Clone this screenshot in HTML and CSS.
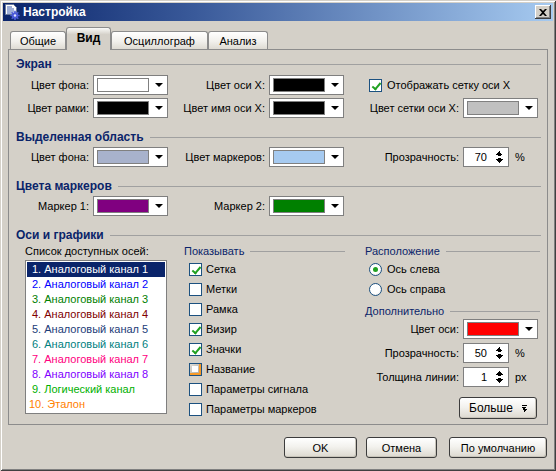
FILE: index.html
```html
<!DOCTYPE html>
<html lang="ru">
<head>
  <meta charset="UTF-8" />
  <title>Настройка</title>
  <link rel="stylesheet" href="styles.css">
</head>
<body>
  <div class="window">
    <div class="titlebar">
      <svg class="app-icon" width="16" height="16" viewBox="0 0 16 16">
        <path d="M1.5 0.5h8l3 3v7h-11z" fill="#fff" stroke="#6a7a9a"/>
        <path d="M3 3h5M3 5h7M3 7h7M3 9h5" stroke="#4060b0"/>
        <circle cx="11" cy="11.5" r="3.2" fill="#4a5ad8"/>
        <path d="M11 6.8v9.4M6.3 11.5h9.4M7.7 8.2l6.6 6.6M14.3 8.2l-6.6 6.6" stroke="#4a5ad8" stroke-width="1.6"/>
        <circle cx="11" cy="11.5" r="1.2" fill="#dfe4ff"/>
      </svg>
      <span class="title">Настройка</span>
      <div class="close-btn">
        <svg width="8" height="7" viewBox="0 0 8 7"><path d="M0 0h2l2 2 2-2h2L5 3.5 8 7H6L4 5 2 7H0l3-3.5z" fill="#000"/></svg>
      </div>
    </div>

    <div class="content">
      <div class="tabs">
        <div class="tab tab-general">Общие</div>
        <div class="tab tab-view active">Вид</div>
        <div class="tab tab-osc">Осциллограф</div>
        <div class="tab tab-analysis">Анализ</div>
      </div>

      <div class="panel">
        <div class="group-title">Экран</div>
        <div class="form-grid first">
          <span class="lbl">Цвет фона:</span>
          <div class="combo"><span class="swatch" style="background:#ffffff"></span><span class="arrow"></span></div>
          <span class="lbl">Цвет оси X:</span>
          <div class="combo"><span class="swatch" style="background:#000000"></span><span class="arrow"></span></div>
          <div class="check-cell"><span class="check checked"></span>Отображать сетку оси X</div>

          <span class="lbl">Цвет рамки:</span>
          <div class="combo"><span class="swatch" style="background:#000000"></span><span class="arrow"></span></div>
          <span class="lbl">Цвет имя оси X:</span>
          <div class="combo"><span class="swatch" style="background:#000000"></span><span class="arrow"></span></div>
          <span class="lbl">Цвет сетки оси X:</span>
          <div class="combo"><span class="swatch" style="background:#c0c0c0"></span><span class="arrow"></span></div>
        </div>

        <div class="group-title spaced">Выделенная область</div>
        <div class="form-grid">
          <span class="lbl">Цвет фона:</span>
          <div class="combo"><span class="swatch" style="background:#a8b2cc"></span><span class="arrow"></span></div>
          <span class="lbl">Цвет маркеров:</span>
          <div class="combo"><span class="swatch" style="background:#a6caf0"></span><span class="arrow"></span></div>
          <span class="lbl">Прозрачность:</span>
          <div class="spin-cell"><div class="spin">70<span class="spin-arrows"></span></div><span class="unit">%</span></div>
        </div>

        <div class="group-title spaced">Цвета маркеров</div>
        <div class="form-grid">
          <span class="lbl">Маркер 1:</span>
          <div class="combo"><span class="swatch" style="background:#800080"></span><span class="arrow"></span></div>
          <span class="lbl">Маркер 2:</span>
          <div class="combo"><span class="swatch" style="background:#008000"></span><span class="arrow"></span></div>
        </div>

        <div class="group-title spaced">Оси и графики</div>
        <div class="axes">
          <div class="axes-list">
            <div class="caption">Список доступных осей:</div>
            <ul class="listbox">
              <li class="selected">1. Аналоговый канал 1</li>
              <li class="c2">2. Аналоговый канал 2</li>
              <li class="c3">3. Аналоговый канал 3</li>
              <li class="c4">4. Аналоговый канал 4</li>
              <li class="c5">5. Аналоговый канал 5</li>
              <li class="c6">6. Аналоговый канал 6</li>
              <li class="c7">7. Аналоговый канал 7</li>
              <li class="c8">8. Аналоговый канал 8</li>
              <li class="c9">9. Логический канал</li>
              <li class="c10">10. Эталон</li>
            </ul>
          </div>

          <div class="axes-show">
            <div class="sub-title">Показывать</div>
            <div class="opt"><span class="check checked"></span>Сетка</div>
            <div class="opt"><span class="check"></span>Метки</div>
            <div class="opt"><span class="check"></span>Рамка</div>
            <div class="opt"><span class="check checked"></span>Визир</div>
            <div class="opt"><span class="check checked"></span>Значки</div>
            <div class="opt"><span class="check hot"></span>Название</div>
            <div class="opt"><span class="check"></span>Параметры сигнала</div>
            <div class="opt"><span class="check"></span>Параметры маркеров</div>
          </div>

          <div class="axes-place">
            <div class="sub-title">Расположение</div>
            <div class="opt radio-opt"><span class="radio on"></span>Ось слева</div>
            <div class="opt radio-opt"><span class="radio"></span>Ось справа</div>
            <div class="sub-title extra">Дополнительно</div>
            <div class="extra-grid">
              <span class="lbl">Цвет оси:</span>
              <div class="combo"><span class="swatch" style="background:#ff0000"></span><span class="arrow"></span></div>
              <span class="lbl">Прозрачность:</span>
              <div class="spin-cell"><div class="spin">50<span class="spin-arrows"></span></div><span class="unit">%</span></div>
              <span class="lbl">Толщина линии:</span>
              <div class="spin-cell"><div class="spin">1<span class="spin-arrows"></span></div><span class="unit">px</span></div>
            </div>
            <div class="more-row">
              <button class="btn more">Больше <span class="more-icon"></span></button>
            </div>
          </div>
        </div>
      </div>

      <div class="dialog-buttons">
        <button class="btn btn-ok">OK</button>
        <button class="btn btn-cancel">Отмена</button>
        <button class="btn btn-default">По умолчанию</button>
      </div>
    </div>
  </div>
</body>
</html>
```

FILE: styles.css
```css
* {
  margin: 0;
  padding: 0;
  box-sizing: border-box;
}
body {
  background: #d4d0c8;
  font-family: "Liberation Sans", Arial, sans-serif;
  font-size: 11px;
  color: #000;
}
.window {
  width: 556px;
  height: 471px;
  padding: 3px;
  background: #d4d0c8;
  box-shadow: inset 1px 1px #d4d0c8, inset -1px -1px #404040, inset 2px 2px #fff, inset -2px -2px #808080;
}

/* title bar */
.titlebar {
  height: 18px;
  display: flex;
  align-items: center;
  padding: 0 2px 0 1px;
  background: linear-gradient(to right, #0a246a, #3a5a9a 35%, #a6caf0);
  color: #fff;
}
.app-icon {
  flex-shrink: 0;
}
.title {
  margin-left: 3px;
  font-weight: bold;
  font-size: 12px;
}
.close-btn {
  margin-left: auto;
  width: 16px;
  height: 14px;
  display: flex;
  align-items: center;
  justify-content: center;
  background: #d4d0c8;
  box-shadow: inset -1px -1px #404040, inset 1px 1px #fff, inset -2px -2px #808080;
}

/* tabs */
.content {
  padding: 0 5px;
}
.tabs {
  display: flex;
  align-items: flex-end;
  height: 22px;
  margin-top: 6px;
  padding-left: 2px;
  position: relative;
  z-index: 1;
}
.tab {
  height: 18px;
  display: flex;
  align-items: center;
  justify-content: center;
  border: 1px solid #8c8c8c;
  border-bottom: none;
  border-radius: 3px 3px 0 0;
  background: linear-gradient(#fff, #f1f0ec 55%, #dedbd3);
}
.tab-general { width: 56px; }
.tab-view { width: 45px; }
.tab-osc { width: 97px; }
.tab-analysis { width: 60px; }
.tab.active {
  height: 23px;
  margin-bottom: -1px;
  font-weight: bold;
  font-size: 12px;
  background: linear-gradient(#fafaf8, #d4d0c8 30%);
  padding-bottom: 2px;
}

/* panel */
.panel {
  width: 540px;
  height: 376px;
  border: 1px solid #8c8c8c;
  padding: 7px 6px 0 7px;
}
.group-title {
  display: flex;
  align-items: center;
  gap: 6px;
  height: 14px;
  color: #0a246a;
  font-weight: bold;
  font-size: 12px;
}
.group-title::after,
.sub-title::after {
  content: "";
  flex: 1;
  height: 1px;
  background: #a0a0a0;
}
.group-title.spaced {
  margin-top: 12px;
}
.form-grid {
  display: grid;
  grid-template-columns: 73px 75px 93px 75px 111px 75px;
  grid-auto-rows: 20px;
  column-gap: 4px;
  row-gap: 3px;
  margin-top: 3px;
}
.form-grid.first {
  margin-top: 4px;
}
.lbl {
  display: flex;
  align-items: center;
  justify-content: flex-end;
  white-space: nowrap;
}
.combo {
  display: flex;
  align-items: center;
  background: #fff;
  border: 1px solid #7f7f7f;
  padding-left: 3px;
}
.swatch {
  width: 52px;
  height: 14px;
  border: 1px solid #808080;
}
.arrow {
  margin-left: 6px;
  width: 0;
  height: 0;
  border-left: 4px solid transparent;
  border-right: 4px solid transparent;
  border-top: 4px solid #000;
}
.check-cell {
  grid-column: span 2;
  display: flex;
  align-items: center;
  gap: 5px;
  padding-left: 21px;
  white-space: nowrap;
}
.spin-cell {
  display: flex;
  align-items: center;
}
.spin {
  width: 46px;
  height: 100%;
  display: flex;
  align-items: center;
  justify-content: flex-end;
  gap: 9px;
  background: #fff;
  border: 1px solid #7f7f7f;
  padding-right: 5px;
}
.spin-arrows {
  width: 7px;
  height: 12px;
  background:
    linear-gradient(to bottom right, transparent 50%, #000 50%) 0 0 / 4px 4px no-repeat,
    linear-gradient(to bottom left, transparent 50%, #000 50%) 3px 0 / 4px 4px no-repeat,
    linear-gradient(#000, #000) 2px 4px / 3px 1px no-repeat,
    linear-gradient(#000, #000) 2px 7px / 3px 1px no-repeat,
    linear-gradient(to top right, transparent 50%, #000 50%) 0 8px / 4px 4px no-repeat,
    linear-gradient(to top left, transparent 50%, #000 50%) 3px 8px / 4px 4px no-repeat;
}
.unit {
  margin-left: 6px;
}

/* check boxes and radios */
.check {
  width: 13px;
  height: 13px;
  flex-shrink: 0;
  border: 1px solid #1c5180;
  background: #fff;
  position: relative;
}
.check.checked::after {
  content: "";
  position: absolute;
  left: 4px;
  top: 1px;
  width: 3px;
  height: 7px;
  border-right: 2px solid #21a121;
  border-bottom: 2px solid #21a121;
  transform: rotate(40deg);
}
.check.hot {
  background: linear-gradient(135deg, #e0ddd6, #a9a59c);
  box-shadow: inset -2px -2px #f89b28;
}
.check.hot::after {
  content: "";
  position: absolute;
  left: 2px;
  top: 2px;
  width: 6px;
  height: 6px;
  background: #fff;
}
.radio {
  width: 13px;
  height: 13px;
  flex-shrink: 0;
  border: 1px solid #1c5180;
  border-radius: 50%;
  background: radial-gradient(circle at 40% 40%, #fff 55%, #dcdad4);
  position: relative;
}
.radio.on::after {
  content: "";
  position: absolute;
  left: 3px;
  top: 3px;
  width: 5px;
  height: 5px;
  border-radius: 50%;
  background: #21a121;
}

/* axes area */
.axes {
  display: flex;
  margin-top: 2px;
}
.caption,
.sub-title {
  height: 14px;
  line-height: 14px;
  white-space: nowrap;
}
.sub-title {
  display: flex;
  align-items: center;
  gap: 6px;
  color: #0a246a;
}
.axes-list {
  margin-left: 9px;
  width: 142px;
}
.listbox {
  list-style: none;
  margin-top: 2px;
  height: 154px;
  border: 1px solid #7f7f7f;
  background: #fff;
  padding: 1px;
}
.listbox li {
  height: 15px;
  line-height: 15px;
  padding-left: 5px;
  white-space: nowrap;
}
.listbox li.selected {
  background: #0a246a;
  color: #fff;
}
.c2 { color: #0000ff; }
.c3 { color: #008000; }
.c4 { color: #800000; }
.c5 { color: #1c3c78; }
.c6 { color: #008080; }
.c7 { color: #ff0080; }
.c8 { color: #8000ff; }
.c9 { color: #00b000; }
.listbox li.c10 { color: #ff8000; padding-left: 2px; }

.axes-show {
  margin-left: 17px;
  width: 161px;
}
.opt {
  height: 20px;
  display: flex;
  align-items: center;
  gap: 4px;
  padding-left: 5px;
  white-space: nowrap;
}
.axes-show .sub-title {
  margin-bottom: 1px;
}
.axes-place {
  margin-left: 20px;
  width: 175px;
}
.axes-place .sub-title {
  margin-bottom: 1px;
}
.radio-opt {
  padding-left: 4px;
  gap: 5px;
}
.sub-title.extra {
  margin-top: 5px;
}
.extra-grid {
  display: grid;
  grid-template-columns: 94px 75px;
  grid-auto-rows: 20px;
  column-gap: 4px;
  row-gap: 4px;
  margin-top: 1px;
}
.more-row {
  display: flex;
  justify-content: flex-end;
  margin-top: 10px;
  padding-right: 3px;
}

/* buttons */
.btn {
  height: 21px;
  font-family: inherit;
  font-size: 11px;
  color: #000;
  border: 1px solid #3c3c3c;
  border-radius: 3px;
  background: linear-gradient(#fff, #f3f2ee 45%, #dcd8cf);
  box-shadow: inset -1px -1px #c8c4ba;
  display: flex;
  align-items: center;
  justify-content: center;
}
.more {
  width: 78px;
  height: 22px;
  gap: 9px;
  font-size: 12px;
}
.more-icon {
  width: 5px;
  height: 7px;
  background:
    linear-gradient(#000, #000) 0 0 / 5px 1px no-repeat,
    linear-gradient(to top right, transparent 50%, #000 50%) 0 2px / 3px 3px no-repeat,
    linear-gradient(to top left, transparent 50%, #000 50%) 2px 2px / 3px 3px no-repeat,
    linear-gradient(to top right, transparent 50%, #000 50%) 0 4px / 3px 3px no-repeat,
    linear-gradient(to top left, transparent 50%, #000 50%) 2px 4px / 3px 3px no-repeat;
}
.dialog-buttons {
  display: flex;
  justify-content: flex-end;
  margin-top: 12px;
  padding-right: 1px;
}
.btn-ok { width: 73px; }
.btn-cancel { width: 71px; margin-left: 9px; }
.btn-default { width: 98px; margin-left: 12px; }
```
